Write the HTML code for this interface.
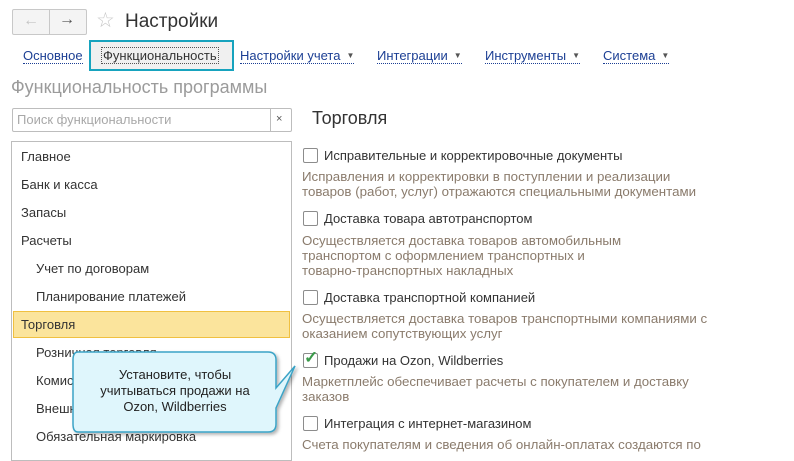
<!DOCTYPE html>
<html><head><meta charset="utf-8"><style>
*{margin:0;padding:0;box-sizing:border-box}
body{width:794px;height:453px;overflow:hidden;background:#fff;font-family:"Liberation Sans",Arial,sans-serif;position:relative;color:#333}
.a{position:absolute;white-space:nowrap}
.nav{position:absolute;top:9px;height:26px;border:1px solid #c8c8c8;background:#f4f4f4;border-radius:2px}
.tab{position:absolute;top:48px;font-size:13px;color:#1c3f94;border-bottom:1px dotted #1c3f94;line-height:15px}
.tab i{font-style:normal;font-size:8px;margin-left:6px;color:#555;vertical-align:2px}
.li{position:absolute;left:21px;font-size:13px;color:#333}
.cb{position:absolute;left:303px;width:15px;height:15px;border:1px solid #8c8c8c;border-radius:2px;background:#fff}
.lb{position:absolute;left:324px;font-size:13px;color:#333}
.ds{position:absolute;left:302px;font-size:13.3px;color:#8a7b6c;line-height:15px}
</style></head><body>
<div class="nav" style="left:12px;width:75px"></div>
<div class="a" style="left:49px;top:10px;width:1px;height:24px;background:#c8c8c8"></div>
<div class="a" style="left:23px;top:12px;font-size:16px;color:#c4c4c4">&#8592;</div>
<div class="a" style="left:59px;top:11px;font-size:16px;color:#555;font-weight:bold">&#8594;</div>
<div class="a" style="left:96px;top:8px;font-size:21px;color:#c8c8c8">&#9734;</div>
<div class="a" style="left:125px;top:11px;font-size:19px;color:#333">Настройки</div>
<div class="tab" style="left:23px">Основное</div>
<div class="a" style="left:89px;top:40px;width:145px;height:31px;border:2px solid #17a3be;background:#f0f0f0"></div>
<div class="a" style="left:101px;top:47px;font-size:13px;color:#333;border:1px dotted #555;padding:0 1px;line-height:15px">Функциональность</div>
<div class="tab" style="left:240px">Настройки учета<i>▼</i></div>
<div class="tab" style="left:377px">Интеграции<i>▼</i></div>
<div class="tab" style="left:485px">Инструменты<i>▼</i></div>
<div class="tab" style="left:603px">Система<i>▼</i></div>
<div class="a" style="left:11px;top:77px;font-size:18px;color:#9b9b9b">Функциональность программы</div>
<div class="a" style="left:12px;top:108px;width:280px;height:24px;border:1px solid #bdbdbd;border-radius:2px"></div>
<div class="a" style="left:270px;top:109px;width:1px;height:22px;background:#bdbdbd"></div>
<div class="a" style="left:276px;top:113px;font-size:11px;color:#555">×</div>
<div class="a" style="left:17px;top:112px;font-size:13px;color:#a8a8a8">Поиск функциональности</div>
<div class="a" style="left:312px;top:108px;font-size:18px;color:#333">Торговля</div>
<div class="a" style="left:11px;top:141px;width:281px;height:320px;border:1px solid #bdbdbd"></div>
<div class="li" style="top:149px">Главное</div>
<div class="li" style="top:177px">Банк и касса</div>
<div class="li" style="top:205px">Запасы</div>
<div class="li" style="top:233px">Расчеты</div>
<div class="li" style="top:261px;left:36px">Учет по договорам</div>
<div class="li" style="top:289px;left:36px">Планирование платежей</div>
<div class="a" style="left:13px;top:311px;width:277px;height:27px;background:#fbe49c;border:1px solid #f0c040"></div>
<div class="li" style="top:317px">Торговля</div>
<div class="li" style="top:345px;left:36px">Розничная торговля</div>
<div class="li" style="top:373px;left:36px">Комиссионная торговля</div>
<div class="li" style="top:401px;left:36px">Внешнеэкономическая</div>
<div class="li" style="top:429px;left:36px">Обязательная маркировка</div>
<div class="cb" style="top:148px"></div><div class="lb" style="top:148px">Исправительные и корректировочные документы</div>
<div class="ds" style="top:169px">Исправления и корректировки в поступлении и реализации<br>товаров (работ, услуг) отражаются специальными документами</div>
<div class="cb" style="top:211px"></div><div class="lb" style="top:211px">Доставка товара автотранспортом</div>
<div class="ds" style="top:233px">Осуществляется доставка товаров автомобильным<br>транспортом с оформлением транспортных и<br>товарно-транспортных накладных</div>
<div class="cb" style="top:290px"></div><div class="lb" style="top:290px">Доставка транспортной компанией</div>
<div class="ds" style="top:311px">Осуществляется доставка товаров транспортными компаниями с<br>оказанием сопутствующих услуг</div>
<div class="cb" style="top:353px"></div>
<div class="a" style="left:304px;top:348px;font-size:17px;color:#3a9a4a;font-weight:bold">✓</div>
<div class="lb" style="top:353px">Продажи на Ozon, Wildberries</div>
<div class="ds" style="top:374px">Маркетплейс обеспечивает расчеты с покупателем и доставку<br>заказов</div>
<div class="cb" style="top:416px"></div><div class="lb" style="top:416px">Интеграция с интернет-магазином</div>
<div class="ds" style="top:437px">Счета покупателям и сведения об онлайн-оплатах создаются по</div>
<svg class="a" style="left:70px;top:348px" width="230" height="92">
<defs><filter id="s"><feDropShadow dx="2" dy="2" stdDeviation="1.5" flood-color="#000" flood-opacity="0.3"/></filter></defs>
<path d="M8,4 H198 Q206,4 206,12 V40 L225,18 L206,60 V76 Q206,84 198,84 H8 Q3,84 3,76 V12 Q3,4 8,4 Z" fill="#dff6fc" stroke="#3aa3c6" stroke-width="1.5" filter="url(#s)"/>
<text x="105" y="31" font-size="13" text-anchor="middle" fill="#222" font-family="Liberation Sans,Arial,sans-serif">Установите, чтобы</text>
<text x="105" y="47" font-size="13" text-anchor="middle" fill="#222" font-family="Liberation Sans,Arial,sans-serif">учитываться продажи на</text>
<text x="105" y="63" font-size="13" text-anchor="middle" fill="#222" font-family="Liberation Sans,Arial,sans-serif">Ozon, Wildberries</text>
</svg>
</body></html>
